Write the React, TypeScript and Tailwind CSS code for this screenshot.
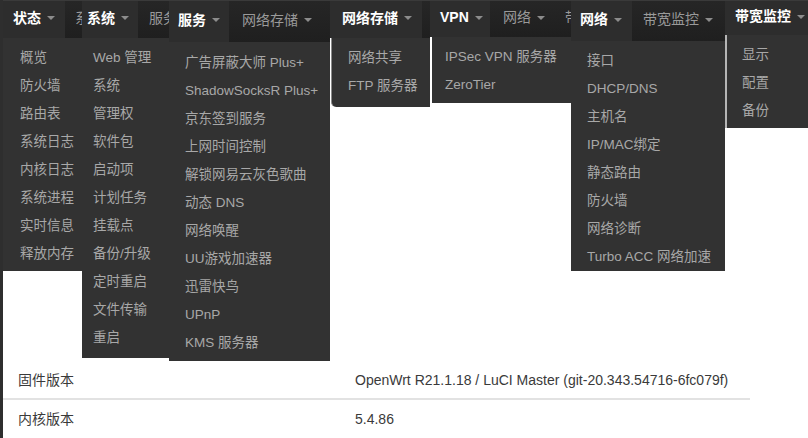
type Tab = { label: string; active?: boolean; caret?: boolean; cls: string };

type MenuColumn = {
  width: string;
  bar: string;
  tabs: Tab[];
  drop: string;
  items: string[];
};

const columns: MenuColumn[] = [
  {
    width: "w-[79px]",
    bar: "h-[38px]",
    tabs: [
      { label: "状态", active: true, caret: true, cls: "w-[62px] pl-[10px]" },
      { label: "系", cls: "pl-[10px]" },
    ],
    drop: "pt-[6px] pb-[3px] pl-[17px]",
    items: ["概览", "防火墙", "路由表", "系统日志", "内核日志", "系统进程", "实时信息", "释放内存"],
  },
  {
    width: "w-[87px]",
    bar: "h-[38px]",
    tabs: [
      { label: "系统", active: true, caret: true, cls: "w-[56px] pl-[5px]" },
      { label: "服务", cls: "pl-[11px]" },
    ],
    drop: "pt-[6px] pb-[6px] pl-[11px]",
    items: ["Web 管理", "系统", "管理权", "软件包", "启动项", "计划任务", "挂载点", "备份/升级", "定时重启", "文件传输", "重启"],
  },
  {
    width: "w-[161px]",
    bar: "h-[42px]",
    tabs: [
      { label: "服务", active: true, caret: true, cls: "w-[60px] pl-[9px]" },
      { label: "网络存储", caret: true, cls: "pl-[13px]" },
    ],
    drop: "pt-[7px] pb-[4px] pl-[16px]",
    items: [
      "广告屏蔽大师 Plus+",
      "ShadowSocksR Plus+",
      "京东签到服务",
      "上网时间控制",
      "解锁网易云灰色歌曲",
      "动态 DNS",
      "网络唤醒",
      "UU游戏加速器",
      "迅雷快鸟",
      "UPnP",
      "KMS 服务器",
    ],
  },
  {
    width: "w-[100px]",
    bar: "h-[38px]",
    tabs: [{ label: "网络存储", active: true, caret: true, cls: "w-[92px] pl-[12px]" }],
    drop: "ml-px border-l border-[#8a8a8a] rounded-bl-[5px] pt-[6px] pb-[7px] pl-[16px]",
    items: ["网络共享", "FTP 服务器"],
  },
  {
    width: "w-[141px]",
    bar: "h-[37px]",
    tabs: [
      { label: "VPN", active: true, caret: true, cls: "w-[60px] pl-[10px]" },
      { label: "网络", caret: true, cls: "pl-[13px]" },
      { label: "带", cls: "pl-[20px]" },
    ],
    drop: "ml-[2px] pt-[6px] pb-[4px] pl-[13px]",
    items: ["IPSec VPN 服务器", "ZeroTier"],
  },
  {
    width: "w-[154px]",
    bar: "h-[41px]",
    tabs: [
      { label: "网络", active: true, caret: true, cls: "w-[61px] pl-[9px]" },
      { label: "带宽监控", caret: true, cls: "pl-[11px]" },
    ],
    drop: "pt-[6px] pb-0 pl-[16px]",
    items: ["接口", "DHCP/DNS", "主机名", "IP/MAC绑定", "静态路由", "防火墙", "网络诊断", "Turbo ACC 网络加速"],
  },
  {
    width: "w-[83px]",
    bar: "h-[35px]",
    tabs: [{ label: "带宽监控", active: true, caret: true, cls: "w-full pl-[10px]" }],
    drop: "border-l-2 border-[#b5b5b5] pt-[6px] pb-[3px] pl-[15px]",
    items: ["显示", "配置", "备份"],
  },
];

function Caret() {
  return (
    <span className="ml-[6px] inline-block h-0 w-0 border-x-[4px] border-t-[4px] border-x-transparent border-t-[#8c8c8c]" />
  );
}

function Column({ col }: { col: MenuColumn }) {
  return (
    <div className={`${col.width} flex shrink-0 flex-col overflow-hidden`}>
      <div className={`${col.bar} flex bg-gradient-to-b from-[#262626] to-[#1f1f1f] border-t border-[#3a3a3a]`}>
        {col.tabs.map((t) => (
          <div
            key={t.label}
            className={`${t.cls} flex shrink-0 items-center whitespace-nowrap pb-[3px] text-[14px] ${
              t.active ? "bg-[#2d2d2d] font-bold text-white" : "text-[#9a9a9a]"
            }`}
          >
            {t.label}
            {t.caret && <Caret />}
          </div>
        ))}
      </div>
      <div className={`${col.drop} bg-[#323232]`}>
        {col.items.map((item) => (
          <div key={item} className="h-[28px] whitespace-nowrap text-[13.5px] leading-[28px] text-[#a8a8a8]">
            {item}
          </div>
        ))}
      </div>
    </div>
  );
}

export default function App() {
  return (
    <div className="h-[438px] w-[808px] overflow-hidden border-l-[3px] border-[#2e2e2e] bg-white font-['Liberation_Sans','Noto_Sans_CJK_SC',sans-serif]">
      <div className="flex h-[362px] items-start">
        {columns.map((col, i) => (
          <Column key={i} col={col} />
        ))}
      </div>
      <div className="w-[747px] text-[14px] text-[#3a3a3a]">
        <div className="flex h-[38px] items-center border-b-2 border-[#e2e2e2]">
          <div className="w-[352px] pl-[15px]">固件版本</div>
          <div>OpenWrt R21.1.18 / LuCI Master (git-20.343.54716-6fc079f)</div>
        </div>
        <div className="flex h-[38px] items-center">
          <div className="w-[352px] pl-[15px]">内核版本</div>
          <div>5.4.86</div>
        </div>
      </div>
    </div>
  );
}
